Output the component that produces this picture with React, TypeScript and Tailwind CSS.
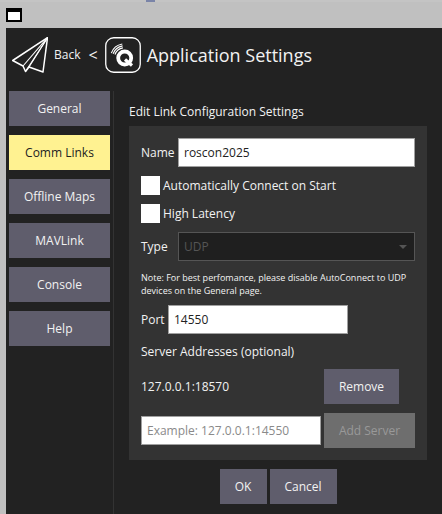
import React from 'react';

const font = { fontFamily: '"Open Sans", sans-serif' };

const navItems = ['General', 'Comm Links', 'Offline Maps', 'MAVLink', 'Console', 'Help'];

const PlaneIcon = () => (
  <svg width="36" height="36" viewBox="0 0 36 36" fill="none" stroke="#fff" strokeWidth="1.5" strokeLinejoin="round">
    <path d="M35.5 0.7 L0.7 23.5 L11 29 L13.5 34.5 L17 30 L31 35 Z" />
    <path d="M35.5 0.7 L11 29" strokeWidth="1.1" />
    <path d="M35.5 0.7 L13.5 34.5" strokeWidth="1.1" />
    <path d="M35.5 0.7 L17 30" strokeWidth="1.1" />
  </svg>
);

const QIcon = () => (
  <svg width="36" height="36" viewBox="0 0 36 36" fill="none">
    <rect x="0.75" y="0.75" width="34.5" height="34.5" rx="8" stroke="#fff" strokeWidth="1.3" />
    <circle cx="19.7" cy="21" r="6.5" stroke="#fff" strokeWidth="3.8" />
    <path d="M20 22.5 L27 28.5" stroke="#fff" strokeWidth="3.2" />
    <path d="M10 17.5 A10.3 10.3 0 0 1 17.9 10.9" stroke="#fff" strokeWidth="1.2" />
    <path d="M8.1 16.8 A12.3 12.3 0 0 1 17.6 8.9" stroke="#fff" strokeWidth="1.2" />
    <path d="M6.3 16.1 A14.3 14.3 0 0 1 17.3 7" stroke="#fff" strokeWidth="1.2" />
  </svg>
);

const Btn = ({ children, className = '' }: { children: React.ReactNode; className?: string }) => (
  <div className={`h-[35px] flex items-center justify-center text-[12px] ${className}`}>{children}</div>
);

const TextBox = ({ value, className = '', muted = false }: { value: string; className?: string; muted?: boolean }) => (
  <div className={`h-[29px] flex items-center bg-white border border-[#a0a0a0] px-[5px] text-[12px] ${muted ? 'text-[#8a8a8a]' : 'text-[#222222]'} ${className}`}>{value}</div>
);

export default function App() {
  return (
    <div style={font} className="w-[442px] h-[514px] overflow-hidden bg-[#c0c0c0] flex flex-col">
      <div className="h-[28px] shrink-0 flex flex-col">
        <div className="h-[2px] bg-[#c4c4c4] pl-[146px]">
          <div className="w-[9px] h-[2px] bg-[#7a84a8]" />
        </div>
        <div className="pl-[6px] pt-[6px]">
          <div className="w-[16px] h-[14px] bg-white border-2 border-black border-t-[4px]" />
        </div>
      </div>
      <div className="flex-1 ml-[6px] bg-[#222222] flex flex-col text-[#f2f2f2]">
        <div className="h-[63px] shrink-0 flex items-center pl-[6px] pb-[9px]">
          <PlaneIcon />
          <span className="ml-[6px] text-[12px]">Back</span>
          <span className="ml-[8px] text-[16px]">&lt;</span>
          <div className="ml-[7px]"><QIcon /></div>
          <span className="ml-[6px] text-[18px]">Application Settings</span>
        </div>
        <div className="flex-1 flex">
          <div className="w-[108px] pl-[3px] flex flex-col gap-[9px] shrink-0 border-r border-[#333333] h-full">
            {navItems.map((item) => (
              <Btn key={item} className={`w-[101px] ${item === 'Comm Links' ? 'bg-[#fff291] text-[#222222]' : 'bg-[#5f5d6c] text-[#f2f2f2]'}`}>{item}</Btn>
            ))}
          </div>
          <div className="pl-[15px] flex flex-col">
            <div className="h-[35px] flex items-center text-[12px] pt-[7px]">Edit Link Configuration Settings</div>
            <div className="w-[298px] h-[334px] bg-[#333333] px-[12px] pt-[12px] flex flex-col">
              <div className="flex items-center h-[29px]">
                <span className="w-[37px] text-[12px]">Name</span>
                <TextBox value="roscon2025" className="w-[237px]" />
              </div>
              <div className="flex items-center h-[19px] mt-[9px] gap-[3px] text-[12px]">
                <div className="w-[19px] h-[19px] bg-white" />
                <span>Automatically Connect on Start</span>
              </div>
              <div className="flex items-center h-[19px] mt-[9px] gap-[3px] text-[12px]">
                <div className="w-[19px] h-[19px] bg-white" />
                <span>High Latency</span>
              </div>
              <div className="flex items-center h-[29px] mt-[9px]">
                <span className="w-[37px] text-[12px]">Type</span>
                <div className="w-[237px] h-[29px] flex items-center justify-between bg-[#1f1f1f] border border-[#555555] px-[5px] text-[12px] text-[#555555]">
                  <span>UDP</span>
                  <div className="w-0 h-0 mr-[2px] border-x-[4px] border-x-transparent border-t-[4px] border-t-[#555555]" />
                </div>
              </div>
              <div className="mt-[10px] text-[9px] leading-[13px] h-[26px]">
                Note: For best perfomance, please disable AutoConnect to UDP devices on the General page.
              </div>
              <div className="flex items-center h-[29px] mt-[8px]">
                <span className="w-[27px] text-[12px]">Port</span>
                <TextBox value="14550" className="w-[180px]" />
              </div>
              <div className="mt-[8px] h-[20px] flex items-center text-[12px]">Server Addresses (optional)</div>
              <div className="flex items-center justify-between h-[35px] mt-[7px] w-[258px]">
                <span className="text-[12px]">127.0.0.1:18570</span>
                <Btn className="w-[75px] bg-[#5f5d6c] text-[#f2f2f2]">Remove</Btn>
              </div>
              <div className="flex items-center h-[35px] mt-[9px] gap-[3px]">
                <TextBox value="Example: 127.0.0.1:14550" muted className="w-[180px]" />
                <Btn className="w-[91px] bg-[#6e6e6e] text-[#999999]">Add Server</Btn>
              </div>
            </div>
            <div className="flex justify-center gap-[3px] mt-[9px]">
              <Btn className="w-[47px] bg-[#5f5d6c] text-[#f2f2f2]">OK</Btn>
              <Btn className="w-[67px] bg-[#5f5d6c] text-[#f2f2f2]">Cancel</Btn>
            </div>
          </div>
        </div>
      </div>
    </div>
  );
}
